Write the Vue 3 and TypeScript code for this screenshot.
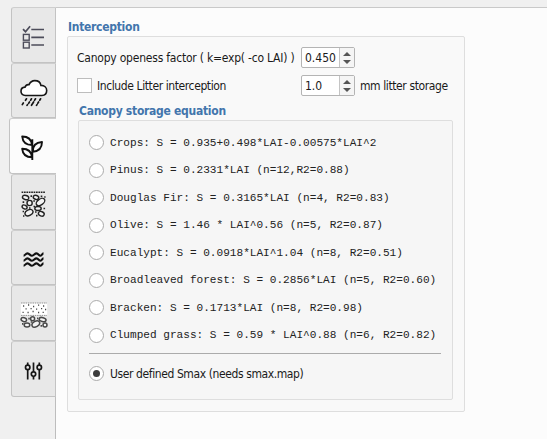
<script setup lang="ts">
import { ref } from 'vue'

interface Equation {
  id: string
  label: string
}

const tabs: string[] = ['options', 'rain', 'plant', 'soil', 'water', 'layers', 'sliders']
const activeTab = ref('plant')
const openness = ref('0.450')
const litter = ref('1.0')
const includeLitter = ref(false)
const selected = ref('user')

const equations: Equation[] = [
  { id: 'crops', label: 'Crops: S = 0.935+0.498*LAI-0.00575*LAI^2' },
  { id: 'pinus', label: 'Pinus: S = 0.2331*LAI (n=12,R2=0.88)' },
  { id: 'fir', label: 'Douglas Fir: S = 0.3165*LAI (n=4, R2=0.83)' },
  { id: 'olive', label: 'Olive: S = 1.46 * LAI^0.56 (n=5, R2=0.87)' },
  { id: 'eucalypt', label: 'Eucalypt: S = 0.0918*LAI^1.04 (n=8, R2=0.51)' },
  { id: 'broad', label: 'Broadleaved forest: S = 0.2856*LAI (n=5, R2=0.60)' },
  { id: 'bracken', label: 'Bracken: S = 0.1713*LAI (n=8, R2=0.98)' },
  { id: 'grass', label: 'Clumped grass: S = 0.59 * LAI^0.88 (n=6, R2=0.82)' },
]
</script>

<template>
  <div class="window">
    <nav class="tabs">
      <button
        v-for="tab in tabs"
        :key="tab"
        type="button"
        class="tab"
        :class="{ active: tab === activeTab }"
        @click="activeTab = tab"
      >
        <svg v-if="tab === 'options'" class="icon" viewBox="0 0 28 28" fill="none" stroke="#4c4c5a" stroke-width="1.4">
          <path d="M3 6.2l2.5 2.5 4.6-5.4M11.3 6.5h12.7M11.3 14.3h12.7M11.3 22h12.7" stroke-width="1.7" />
          <rect x="3.4" y="11.4" width="5.8" height="5.8" />
          <rect x="3.4" y="19.2" width="5.8" height="5.8" />
        </svg>
        <svg v-else-if="tab === 'rain'" class="icon" viewBox="0 0 28 28" fill="none" stroke="#161616" stroke-width="1.6" stroke-linecap="round">
          <path d="M5.5 16.5C2.7 16.2 1 14.4 1 12.2c0-2.3 1.7-4 4-4.1C5.7 6.3 7 5.4 9 5.7 10.2 2.9 12.2 1.6 14.8 1.6c3.3 0 5.6 1.9 6.1 4.8 3.5-.1 5.8 2 5.8 5 0 2.8-1.8 4.8-4.8 5.1z" fill="#fff" />
          <path d="M6.5 19.8l-1 1.5M11.5 19.8l-.9 1.4M9.5 23l-.9 1.4M15.5 19.8l-1 1.6M20.6 19.8l-.9 1.4M18.6 23l-.9 1.4M3.3 24l-1 1.6M7.5 25.6l-.5.8M13.6 23l-2.1 3.3M17 25.6l-.5.8" stroke-width="1.7" />
        </svg>
        <svg v-else-if="tab === 'plant'" class="icon plant" viewBox="0 0 28 28" fill="none" stroke="#111" stroke-width="1.9" stroke-linejoin="round">
          <path d="M13.3 27V6.2M13 12C7 12 3.7 9 3.2 3.5c5.6 0 9.2 2.4 9.8 8.5zM13 24.2C7 24.2 3.7 21 3.2 15.8c5.6 0 9.2 2.4 9.8 8.4zM13.8 18.7c-.2-6 3.3-9.3 9.2-9.7-.1 6-3.4 9.4-9.2 9.7z" />
        </svg>
        <svg v-else-if="tab === 'soil'" class="icon" viewBox="0 0 28 28" fill="#f3f3f3" stroke="#222" stroke-width="1.4">
          <path d="M1.6 2.3h24" stroke-width="1.5" stroke-dasharray="1.7 .7" />
          <ellipse cx="5.6" cy="7.5" rx="3.2" ry="2.1" transform="rotate(15 5.6 7.5)" />
          <ellipse cx="16" cy="7.4" rx="2.8" ry="2" transform="rotate(20 16 7.4)" />
          <ellipse cx="20.5" cy="12" rx="4.8" ry="2.9" transform="rotate(-35 20.5 12)" />
          <circle cx="9.6" cy="13" r="2.6" />
          <ellipse cx="4.6" cy="17" rx="2.6" ry="1.9" transform="rotate(25 4.6 17)" />
          <ellipse cx="18" cy="18.5" rx="3.2" ry="2" />
          <ellipse cx="9" cy="22.7" rx="4.2" ry="2.8" transform="rotate(-28 9 22.7)" />
          <ellipse cx="21.3" cy="23.8" rx="3" ry="2.2" transform="rotate(20 21.3 23.8)" />
          <path d="M10.5 6.2h1.6M20.7 6.4h1.6M24.2 7h1.4M2.6 12.2h1.6M13.3 11h1.6M13.5 16.5h1.5M9 18h1.5M23.5 18.5h1.6M2.6 21.5h1.4M15 22h1.6M16 25.7h1.5M3 26h1.4" stroke-width="1.7" />
        </svg>
        <svg v-else-if="tab === 'water'" class="icon" viewBox="0 0 28 28" fill="none" stroke="#111" stroke-width="2.1">
          <path d="M3.6 9.6c1.5 0 1.9-2.2 3.9-2.2s2.6 2.4 4.5 2.4 2.6-2.4 4.5-2.4 2.4 2.4 4 2.4 1.5-2.4 3-2.4M3.6 14.6c1.5 0 1.9-2.2 3.9-2.2s2.6 2.4 4.5 2.4 2.6-2.4 4.5-2.4 2.4 2.4 4 2.4 1.5-2.4 3-2.4M3.6 19.6c1.5 0 1.9-2.2 3.9-2.2s2.6 2.4 4.5 2.4 2.6-2.4 4.5-2.4 2.4 2.4 4 2.4 1.5-2.4 3-2.4" />
        </svg>
        <svg v-else-if="tab === 'layers'" class="icon" viewBox="0 0 28 28" fill="#f3f3f3" stroke="#484848" stroke-width="1.5">
          <rect x=".8" y="2" width="26.4" height="12.4" fill="#fff" stroke="none" />
          <path d="M1 2h26M1 14.4h26" stroke="#888" stroke-width=".9" stroke-dasharray="1.5 .8" />
          <path d="M3 5h1.2M8 4h1.2M13 5.5h1.2M18 4.1h1.2M23 5h1.2M5.5 7.9h1.2M10.5 7.7h1.2M16 8.1h1.2M21 7.7h1.2M25 8.5h1.2M2.5 11.3h1.2M7.5 11.5h1.2M12.5 10.5h1.2M18 11.5h1.2M22.6 11.3h1.2" stroke-width="1.3" />
          <ellipse cx="3.8" cy="18.6" rx="2.8" ry="1.9" transform="rotate(15 3.8 18.6)" />
          <circle cx="12.6" cy="17.8" r="2" />
          <ellipse cx="22.6" cy="18.6" rx="3.5" ry="2" transform="rotate(15 22.6 18.6)" />
          <ellipse cx="7" cy="24" rx="2.8" ry="2" />
          <ellipse cx="15.8" cy="23" rx="4.1" ry="2.7" transform="rotate(-30 15.8 23)" />
          <circle cx="25" cy="24" r="2" />
          <path d="M8.3 17.6h1.5M17 17.4h1.4M2 22.8h1.5M10.7 21h1.5M20.5 24.8h1.6" stroke-width="1.7" />
        </svg>
        <svg v-else class="icon" viewBox="0 0 28 28" fill="none" stroke="#161616" stroke-width="1.7">
          <path d="M7.7 5.5V8M7.7 12.8v9.6M13.5 5.5v9.2M13.5 19.5v2.9M19.3 5.5V8M19.3 12.8v9.6" />
          <circle cx="7.7" cy="10.4" r="2.2" />
          <circle cx="13.5" cy="17.1" r="2.2" />
          <circle cx="19.3" cy="10.4" r="2.2" />
        </svg>
      </button>
      <div class="rail"></div>
    </nav>

    <main class="page">
      <h1 class="title main-title">Interception</h1>
      <section class="group outer">
        <div class="row">
          <span class="label factor">Canopy openess factor ( k=exp( -co LAI) )</span>
          <div class="spin">
            <input v-model="openness" class="value" aria-label="Canopy openess factor" />
            <span class="arrows">
              <i class="up"></i><i class="down"></i>
            </span>
          </div>
        </div>
        <div class="row">
          <label class="check">
            <input v-model="includeLitter" type="checkbox" class="box" />
            <span class="label">Include Litter interception</span>
          </label>
          <div class="spin">
            <input v-model="litter" class="value" aria-label="Litter storage" />
            <span class="arrows">
              <i class="up"></i><i class="down"></i>
            </span>
          </div>
          <span class="label unit">mm litter storage</span>
        </div>

        <h2 class="title sub-title">Canopy storage equation</h2>
        <section class="group inner">
          <label v-for="eq in equations" :key="eq.id" class="choice">
            <input v-model="selected" type="radio" name="equation" class="radio" :value="eq.id" />
            <span class="mono">{{ eq.label }}</span>
          </label>
          <hr class="rule" />
          <label class="choice">
            <input v-model="selected" type="radio" name="equation" class="radio" value="user" />
            <span class="label">User defined Smax (needs smax.map)</span>
          </label>
        </section>
      </section>
    </main>
  </div>
</template>

<style>
body {
  margin: 0;
  background: #f0f0f0;
}
</style>

<style scoped>
.window {
  display: flex;
  box-sizing: border-box;
  width: 547px;
  height: 439px;
  padding-top: 7px;
  overflow: hidden;
  background: #f0f0f0;
  color: #1a1a1a;
  font-family: 'DejaVu Sans Condensed', 'DejaVu Sans', sans-serif;
  font-stretch: condensed;
  font-size: 12px;
}
.tabs {
  display: flex;
  flex-direction: column;
  align-items: flex-end;
  width: 56px;
  flex: none;
}
.tab {
  display: flex;
  align-items: center;
  justify-content: center;
  box-sizing: border-box;
  flex: none;
  width: 45px;
  height: 55.7px;
  padding: 4px 0 0;
  border: 1px solid #c3c3c3;
  border-top-color: #cecece;
  border-radius: 3px 0 0 3px;
  background: #e8e8e8;
}
.tab.active {
  width: 47px;
  padding: 2px 1px 0 0;
  border-right: 0;
  background: #fcfcfc;
}
.icon {
  width: 28px;
  height: 28px;
}
.rail {
  width: 1px;
  flex: 1;
  background: #bdbdbd;
}
.page {
  flex: 1;
  min-width: 0;
  padding: 11px 82px 0 11px;
  border-top: 1px solid #c9c9c9;
  background: #fcfcfc;
}
.title {
  margin: 0;
  color: #4275ac;
  font-size: 12px;
  font-weight: bold;
  letter-spacing: -0.28px;
  line-height: 17px;
  white-space: nowrap;
}
.main-title {
  padding-left: 1px;
}
.group {
  box-sizing: border-box;
  border: 1px solid #dedede;
  border-radius: 2px;
}
.outer {
  height: 376px;
  padding: 10px 11px 0 9px;
  background: #f9f9f9;
}
.row {
  display: flex;
  align-items: center;
  height: 21px;
  margin-bottom: 7px;
}
.label {
  letter-spacing: -0.4px;
  line-height: 20px;
  white-space: nowrap;
}
.factor,
.check {
  width: 224px;
  flex: none;
}
.factor {
  letter-spacing: -0.22px;
}
.check {
  display: flex;
  align-items: center;
  gap: 5px;
}
.box {
  appearance: none;
  box-sizing: border-box;
  width: 15px;
  height: 15px;
  margin: 0;
  border: 1px solid #bdbdbd;
  background: #fff;
}
.spin {
  display: flex;
  box-sizing: border-box;
  width: 54px;
  height: 21px;
  flex: none;
  border: 1px solid #b4b4b4;
  border-radius: 2px;
  background: #fff;
}
.value {
  box-sizing: border-box;
  width: 37px;
  padding: 0 0 0 3px;
  border: 0;
  background: transparent;
  color: inherit;
  font: inherit;
}
.arrows {
  display: flex;
  flex: 1;
  flex-direction: column;
  align-items: center;
  justify-content: center;
  gap: 4px;
  border-left: 1px solid #c4c4c4;
  background: #f5f5f5;
}
.up,
.down {
  border: 4px solid transparent;
}
.up {
  border-top: 0;
  border-bottom-color: #555;
}
.down {
  border-bottom: 0;
  border-top-color: #555;
}
.unit {
  margin-left: 5px;
}
.sub-title {
  padding-left: 2px;
}
.inner {
  height: 280px;
  margin-left: 1px;
  padding: 8px 11px 0 10px;
  background: #f6f6f6;
}
.choice {
  display: flex;
  align-items: center;
  gap: 6px;
  height: 27.5px;
}
.radio {
  display: grid;
  place-items: center;
  appearance: none;
  box-sizing: border-box;
  width: 15px;
  height: 15px;
  flex: none;
  margin: 0;
  border: 1px solid #ababab;
  border-radius: 50%;
  background: #fff;
}
.radio:checked::before {
  content: '';
  width: 7px;
  height: 7px;
  border-radius: 50%;
  background: #3d3d3d;
}
.mono {
  color: #222;
  font-family: 'Liberation Mono', monospace;
  font-size: 11.1px;
  white-space: pre;
}
.rule {
  height: 1px;
  margin: 4px 0 6px;
  border: 0;
  background: #ababab;
}
</style>
